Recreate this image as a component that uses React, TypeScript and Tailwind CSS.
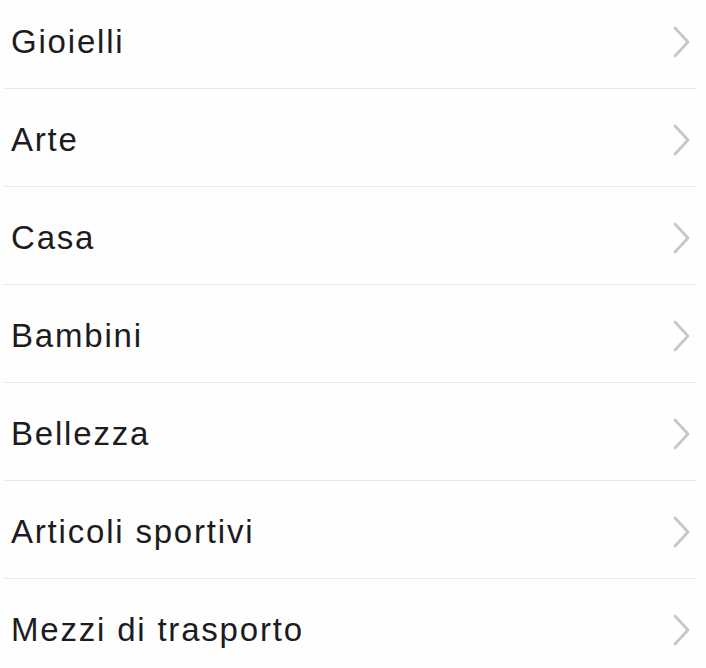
import { ChevronRight } from "lucide-react";

const categories = [
  "Gioielli",
  "Arte",
  "Casa",
  "Bambini",
  "Bellezza",
  "Articoli sportivi",
  "Mezzi di trasporto",
];

export default function App() {
  return (
    <main className="w-[706px] h-[668px] overflow-hidden bg-[#fefefe] font-['Liberation_Sans',sans-serif]">
      <ul className="-mt-[9px]">
        {categories.map((name) => (
          <li key={name} className="ml-[4px] mr-[9px] border-b border-[#e8e8ec]">
            <div className="h-[97px] pt-[4px] pl-[7px] pr-[6px] flex items-center justify-between">
              <span className="text-[33px] tracking-[1.8px] text-[#1c1c1e]">{name}</span>
              <svg width="18" height="32" viewBox="0 0 18 32" fill="none" className="text-[#c5c5ca]">
                <path d="M2 2 L15 16 L2 30" stroke="currentColor" strokeWidth="2.6" strokeLinecap="round" strokeLinejoin="round" />
              </svg>
            </div>
          </li>
        ))}
      </ul>
    </main>
  );
}
